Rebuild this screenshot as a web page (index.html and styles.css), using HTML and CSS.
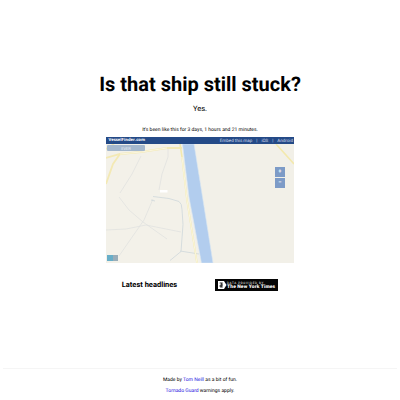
FILE: index.html
```html
<!DOCTYPE html>
<html lang="en">
<head>
<meta charset="utf-8">
<title>Is that ship still stuck?</title>
<link rel="stylesheet" href="styles.css">
</head>
<body>
<main>
  <h1>Is that ship still stuck?</h1>
  <p class="answer">Yes.</p>
  <p class="since">It's been like this for 3 days, 1 hours and 21 minutes.</p>
  <section class="map">
    <div class="bar"><b>VesselFinder.com</b><span class="links"><span>Embed this map</span><i>|</i><span>iOS</span><i>|</i><span>Android</span></span></div>
    <div class="canvas">
      <svg viewBox="106 144 188 118.5" width="188" height="118.5" fill="none">
        <path fill="#f2f0e8" d="M106 144h188v119H106z"/>
        <path fill="#f3f1e9" d="M106 144h76l7 56 10 63h-93z"/>
        <path stroke="#e1e2df" stroke-width=".8" d="M141 156l-9 18-12 19M168 149v8l-6 17-3 16M106 230l20-1 20-4 35 7M119 197l10 13 14 12 24 17M153 199l-9 21-16 23-9 13"/>
        <path stroke="#d3dadd" stroke-width=".9" d="M153 196.500l16 2 10 3q3 2 3 8l1 15-2 27-11 9M155 201l-4-1M180 251l19 3"/>
        <path stroke="#f3e9b4" stroke-width="1.800" d="M106 158l14-4 21-2 26-4 15 0M120 154l-7 10-7 20M106 149l8-5"/>
        <path stroke="#f3e9ad" stroke-width="1.600" d="M180 144l2 13 5 43 10 63M276 144l18 20"/>
        <path stroke="#fff" stroke-width=".6" d="M120 154l21-2 26-4M182 157l5 43 10 63"/>
        <path fill="#b2cdee" stroke="#d8e5f1" stroke-width=".6" d="M182.500 144h11.500l8.500 53 10.500 66h-11.500l-12.500-66z"/>
        <path fill="#fff" d="M160 190h7.500v2.500h-7.500z"/>
      </svg>
      <span class="ship">EVER</span>
      <div class="zoom"><span>+</span><span>−</span></div>
      <div class="layers"><i></i><i></i></div>
    </div>
  </section>
  <section class="news">
    <h2>Latest headlines</h2>
    <div class="nyt">
      <svg width="9" height="10" viewBox="0 0 9 10"><path fill="#fff" d="M0 1h6l2.500 4-2.500 4H0z"/><path fill="none" stroke="#111" stroke-width=".9" d="M1.700 3h3M5 5H2.200v2h2.500M3.700 3v4"/></svg>
      <div class="credit"><span>DATA PROVIDED BY</span><b>The New York Times</b></div>
    </div>
  </section>
</main>
<footer>
  <p>Made by <a href="#">Tom Neill</a> as a bit of fun.</p>
  <p><a href="#">Tornado Guard</a> warnings apply.</p>
</footer>
</body>
</html>
```
FILE: styles.css
```css
* { box-sizing: border-box; }
body {
  margin: 0;
  height: 400px;
  display: flex;
  flex-direction: column;
  justify-content: space-between;
  overflow: hidden;
  background: #fff;
  color: #000;
  font-family: Roboto, "Liberation Sans", sans-serif;
  text-rendering: geometricPrecision;
}
h1, h2, p { margin: 0; }
main { padding-top: 71px; text-align: center; }
h1 { font-size: 20px; line-height: 26px; font-weight: 700; white-space: nowrap; }
.answer { margin-top: 7px; font-size: 7.5px; line-height: 10px; }
.since { margin-top: 12px; font-size: 5px; line-height: 8px; }
.map { width: 188px; margin: 3px auto 0; }
.bar {
  height: 7px;
  padding: 1px 1px 0 2.5px;
  display: flex;
  justify-content: space-between;
  align-items: center;
  background: #244a87;
  color: #fff;
  font-size: 4.5px;
  line-height: 7px;
}
.bar b { font-family: "Open Sans", sans-serif; font-size: 4.2px; line-height: 8px; }
.links { display: flex; gap: 4px; color: #d3dceb; }
.links i { font-style: normal; }
.canvas { position: relative; height: 118.5px; }
.canvas svg { display: block; }
.ship {
  position: absolute;
  left: 1px;
  top: 1px;
  width: 38px;
  height: 6px;
  border-radius: 1px;
  background: #a4b7cd;
  color: #e9eff5;
  font-size: 4px;
  line-height: 7px;
}
.zoom {
  position: absolute;
  left: 169px;
  top: 23px;
  display: grid;
  gap: 1px;
}
.zoom span {
  width: 10px;
  height: 10px;
  background: #7d9bc7;
  color: #fff;
  font-size: 6px;
  font-weight: 700;
  line-height: 10px;
}
.layers { position: absolute; left: 1px; bottom: 2px; display: flex; }
.layers i { width: 6px; height: 6px; background: #68aec8; }
.layers i + i { width: 5px; background: #99adb9; }
.news {
  width: 188px;
  margin: 16px auto 0;
  display: grid;
  grid-template-columns: 87px 63px;
  column-gap: 22px;
  align-items: center;
}
h2 { font-size: 7.5px; line-height: 12px; white-space: nowrap; }
.nyt {
  height: 12px;
  padding-left: 3px;
  display: flex;
  align-items: center;
  gap: 0;
  background: #050505;
  color: #fff;
  text-align: left;
  white-space: nowrap;
}
.nyt svg { flex: none; }
.credit { display: grid; padding-top: 2px; }
.credit span { font-size: 3px; line-height: 4px; letter-spacing: .65px; }
.credit b { font: 900 4.9px/5.5px Roboto, sans-serif; letter-spacing: .14px; }
footer {
  height: 32px;
  margin: 0 3px;
  padding-top: 7px;
  border-top: 1px solid #f5f5f5;
  text-align: center;
  font-size: 5px;
  line-height: 8px;
}
footer p + p { margin-top: 3px; }
footer a { color: #1c12e0; text-decoration: none; }
```
